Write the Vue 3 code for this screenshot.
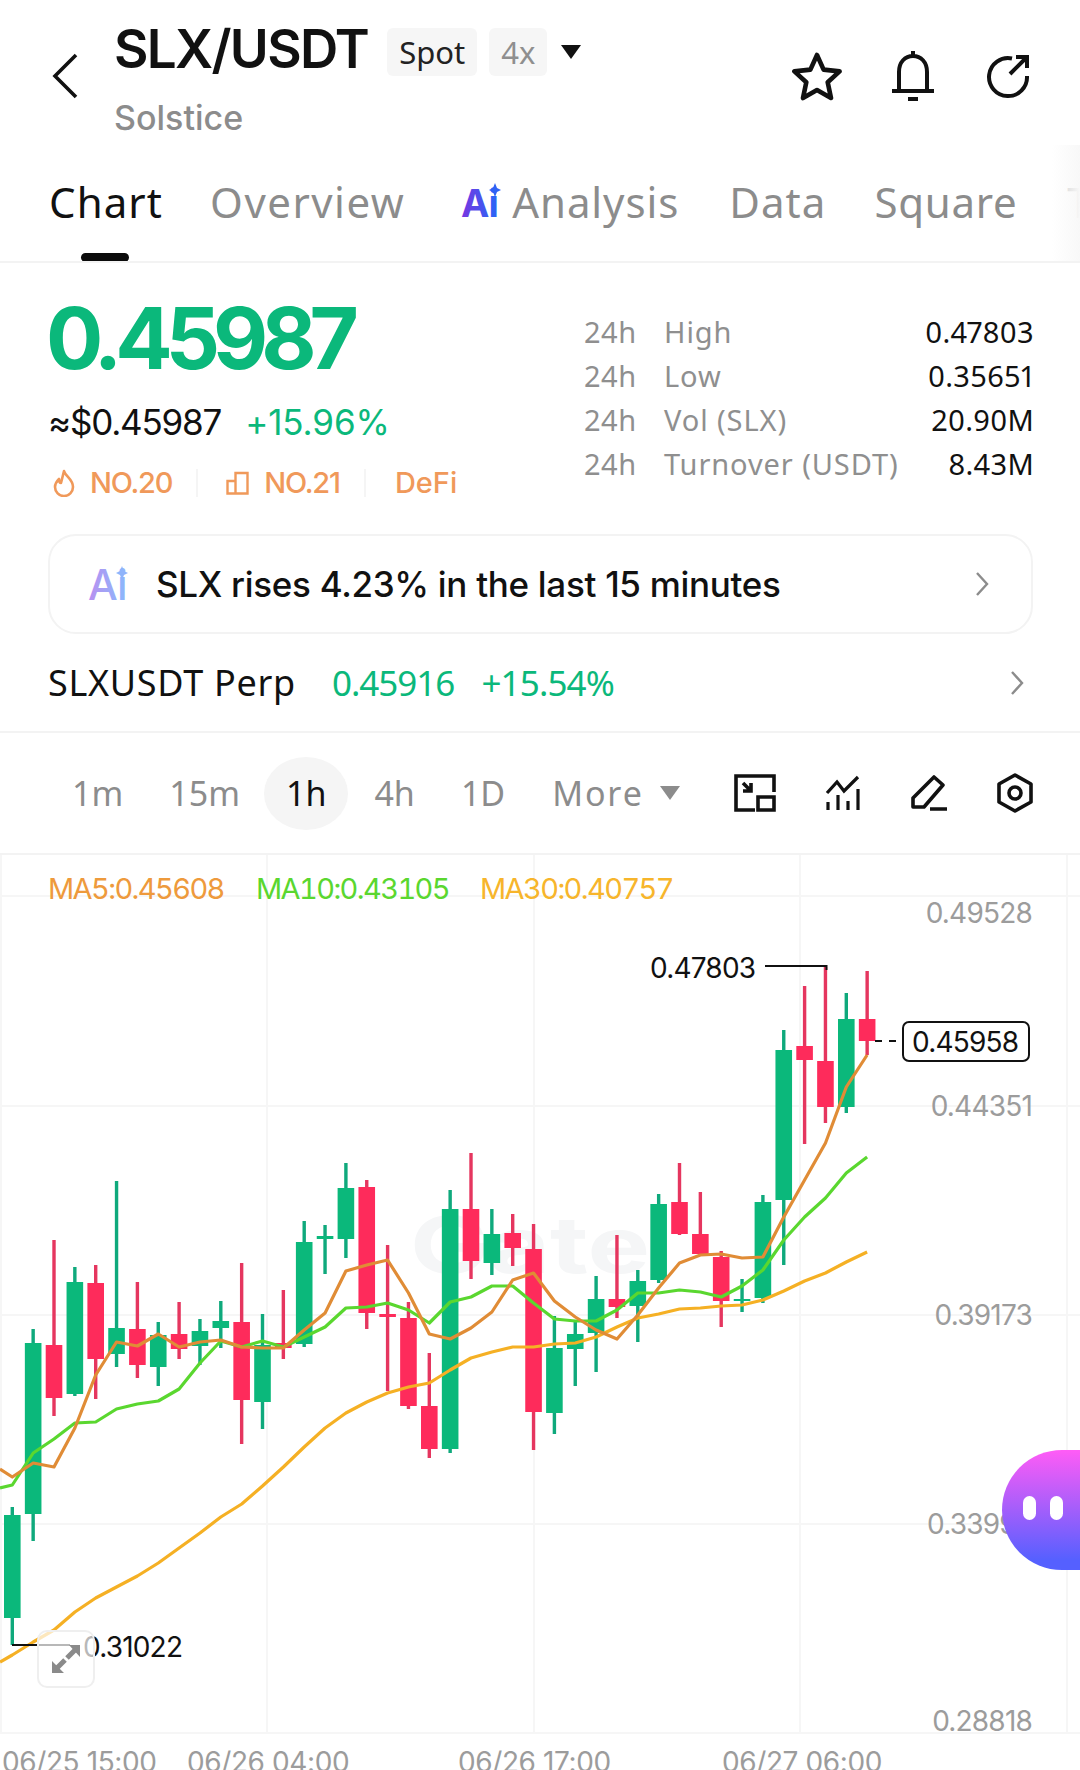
<template>
  <div class="page">
    <!-- en-tete -->
    <header class="head">
      <svg class="back" width="26" height="46" viewBox="0 0 26 46"><path d="M24 2 3 23l21 21" fill="none" stroke="#111" stroke-width="3.6" /></svg>
      <div class="pair">
        <div class="pair-row">
          <span class="symbol">SLX/USDT</span>
          <span class="tag">Spot</span>
          <span class="tag lev">4x</span>
          <span class="caret"></span>
        </div>
        <div class="fullname">Solstice</div>
      </div>
      <div class="head-icons">
        <svg width="52" height="50" viewBox="0 0 52 50"><path d="M26 4l6.6 14.6 16 1.8-11.9 10.800 3.300 15.800L26 39.100 12 47l3.300-15.800L3.400 20.400l16-1.800z" fill="none" stroke="#111" stroke-width="4.600" stroke-linejoin="round" /></svg>
        <svg width="48" height="52" viewBox="-1 0 48 52"><path d="M23 1v5M9 39V22C9 12 15 6 23 6s14 6 14 16v17M2 41h42M18 49h10" fill="none" stroke="#111" stroke-width="4" /></svg>
        <svg width="46" height="46" viewBox="0 0 46 46"><path d="M27 5.500A19 19 0 1 0 42 23M25 21 41 5M31 4h11v11" fill="none" stroke="#111" stroke-width="4" /></svg>
      </div>
    </header>

    <!-- onglets -->
    <nav class="tabs">
      <span class="tab active">Chart<i class="bar"></i></span>
      <span class="tab overview">Overview</span>
      <span class="tab ai-tab">
        <svg width="46" height="36" viewBox="0 0 46 36">
          <defs>
            <linearGradient id="aiTab" x1="0" y1="0" x2="1" y2="0"><stop offset="0" stop-color="#7a35e0" /><stop offset="0.85" stop-color="#2f62f5" /></linearGradient>
          </defs>
          <text x="0" y="34" class="ai-letters" fill="url(#aiTab)">Ai</text>
          <path d="M34 0l2 5 4 2-4 2-2 5-2-5-4-2 4-2z" fill="#2f62f5" />
        </svg>
        Analysis
      </span>
      <span class="tab">Data</span>
      <span class="tab square">Square</span>
      <span class="tab">T</span>
      <div class="tabs-fade"></div>
    </nav>

    <!-- prix -->
    <section class="ticker">
      <div class="ticker-left">
        <div class="price">0.45987</div>
        <div class="sub-row">
          <span class="usd">≈$0.45987</span>
          <span class="pct">+15.96%</span>
        </div>
        <div class="ranks">
          <svg width="24" height="28" viewBox="0 0 24 28"><path d="M12 2c1 5 9 8 9 16a9 9 0 0 1-18 0c0-4 2-6 4-8 0 3 1 4 2 4 1-4 2-8 3-12z" fill="none" stroke="#f0995a" stroke-width="2.600" stroke-linejoin="round" /></svg>
          <span class="rank">NO.20</span>
          <i class="sep"></i>
          <svg width="24" height="24" viewBox="0 0 24 24"><path d="M1.500 10h8v12.500h-8zM9.500 22.500V2h12v20.500h-12" fill="none" stroke="#f0995a" stroke-width="2.400" /></svg>
          <span class="rank">NO.21</span>
          <i class="sep"></i>
          <span class="rank defi">DeFi</span>
        </div>
      </div>
      <div class="stats">
        <template v-for="s in stats" :key="s.label">
          <span class="s-h">24h</span>
          <span class="s-l">{{ s.label }}</span>
          <span class="s-v">{{ s.value }}</span>
        </template>
      </div>
    </section>

    <!-- carte ai -->
    <div class="ai-card">
      <svg width="46" height="36" viewBox="0 0 46 36">
        <defs>
          <linearGradient id="aiCard" x1="0" y1="0" x2="1" y2="0"><stop offset="0" stop-color="#b98ff0" /><stop offset="0.85" stop-color="#8fb4fb" /></linearGradient>
        </defs>
        <text x="0" y="34" class="ai-letters big" fill="url(#aiCard)">Ai</text>
        <path d="M34 0l2 5 4 2-4 2-2 5-2-5-4-2 4-2z" fill="#8fb4fb" />
      </svg>
      <span class="ai-text">SLX rises 4.23% in the last 15 minutes</span>
      <svg class="chev" width="14" height="26" viewBox="0 0 14 26"><path d="M2 2l10 11L2 24" fill="none" stroke="#8c8c8c" stroke-width="2.400" /></svg>
    </div>

    <div class="perp">
      <span class="perp-name">SLXUSDT Perp</span>
      <span class="perp-price">0.45916</span>
      <span class="perp-pct">+15.54%</span>
      <svg class="chev" width="14" height="26" viewBox="0 0 14 26"><path d="M2 2l10 11L2 24" fill="none" stroke="#8c8c8c" stroke-width="2.400" /></svg>
    </div>

    <!-- intervalles -->
    <div class="periods">
      <span v-for="p in periods" :key="p" class="period" :class="{ on: p === '1h' }">{{ p }}</span>
      <span class="period more">More<i class="caret gray"></i></span>
      <div class="tools">
        <svg width="42" height="38" viewBox="0 0 42 38"><path d="M21 36H2V2h38v16M9 9l8 8M17 9v8H9M24 23h16v13H24z" fill="none" stroke="#111" stroke-width="3.600" /></svg>
        <svg width="36" height="36" viewBox="0 0 36 36"><path d="M2 18 12 7l7 9L33 2" fill="none" stroke="#111" stroke-width="3.200" /><path d="M3 27v8M13 20v15M23 26v9M33 14v21" fill="none" stroke="#111" stroke-width="3.200" /></svg>
        <svg width="38" height="36" viewBox="0 0 38 36"><path d="M24 2l9 8-19 22H3v-9zM20 34h17" fill="none" stroke="#111" stroke-width="3.600" stroke-linejoin="round" /></svg>
        <svg width="36" height="40" viewBox="0 0 36 40"><path d="M18 2l16 9v18l-16 9-16-9V11z" fill="none" stroke="#111" stroke-width="3.600" stroke-linejoin="round" /><circle cx="18" cy="20" r="6" fill="none" stroke="#111" stroke-width="3.600" /></svg>
      </div>
    </div>

    <!-- graphique : toile libre, coordonnees = celles de la page moins 855 -->
    <div class="chart">
      <svg class="plot" width="1080" height="915" viewBox="0 855 1080 915">
        <g stroke="#f6f6f6" stroke-width="2">
          <line v-for="y in gridY" :key="y" x1="0" x2="1080" :y1="y" :y2="y" />
          <line v-for="x in gridX" :key="x" :x1="x" :x2="x" y1="855" y2="1733" />
        </g>
        <text x="410" y="1273" class="mark" textLength="240" lengthAdjust="spacingAndGlyphs">Gate</text>

        <g v-for="(c, i) in candles" :key="i">
          <rect :x="cx(i) - 1.700" :y="c[0]" width="3.400" :height="c[3] - c[0]" :fill="c[4] === 'g' ? '#0fa97c' : '#e5365f'" />
          <rect :x="cx(i) - 8.300" :y="c[1]" width="16.600" :height="c[2] - c[1]" :fill="c[4] === 'g' ? '#0bb87b' : '#fe2b5b'" />
        </g>

        <polyline :points="line(ma30, 1662)" fill="none" stroke="#f5b024" stroke-width="3.200" stroke-linejoin="round" />
        <polyline :points="line(ma10, 1488)" fill="none" stroke="#5ad72f" stroke-width="3.200" stroke-linejoin="round" />
        <polyline :points="line(ma5, 1469)" fill="none" stroke="#e08c36" stroke-width="3.200" stroke-linejoin="round" />

        <text x="48" y="899" class="ma" fill="#ee9a3c">MA5:0.45608</text>
        <text x="256" y="899" class="ma" fill="#5ad72f">MA10:0.43105</text>
        <text x="480" y="899" class="ma" fill="#f7b52b">MA30:0.40757</text>

        <text v-for="a in axis" :key="a.t" x="1032" :y="a.y" text-anchor="end" class="axis">{{ a.t }}</text>
        <text v-for="d in dates" :key="d.t" :x="d.x" y="1772" class="axis date">{{ d.t }}</text>

        <path d="M765 966h61.500v4" fill="none" stroke="#111" stroke-width="2" />
        <text x="650" y="978" class="note">0.47803</text>
        <path d="M875 1041h27" fill="none" stroke="#111" stroke-width="2" stroke-dasharray="7 7" />
        <rect x="903" y="1022" width="126" height="39" rx="6" fill="#fff" stroke="#111" stroke-width="2" />
        <text x="912" y="1052" class="note">0.45958</text>
        <path d="M12 1645h58" fill="none" stroke="#111" stroke-width="2" />
        <text x="83" y="1657" class="note">0.31022</text>
      </svg>

      <button class="expand">
        <svg width="30" height="30" viewBox="0 0 30 30"><path d="M29 1v12L18 1zM1 29V17l12 12z" fill="#8a8a8a" /><path d="M16 14l8-8M6 24l8-8" stroke="#8a8a8a" stroke-width="5" /></svg>
      </button>
      <div class="bubble"><i></i><i></i></div>
    </div>
  </div>
</template>

<script setup>
const stats = [
  { label: 'High', value: '0.47803' },
  { label: 'Low', value: '0.35651' },
  { label: 'Vol (SLX)', value: '20.90M' },
  { label: 'Turnover (USDT)', value: '8.43M' },
]

const periods = ['1m', '15m', '1h', '4h', '1D']

const gridY = [896, 1106, 1315, 1524, 1733]
const gridX = [1, 267, 534, 800, 1067]

const axis = [
  { t: '0.49528', y: 923 },
  { t: '0.44351', y: 1116 },
  { t: '0.39173', y: 1325 },
  { t: '0.33995', y: 1534 },
  { t: '0.28818', y: 1731 },
]

const dates = [
  { t: '06/25 15:00', x: 2 },
  { t: '06/26 04:00', x: 187 },
  { t: '06/26 17:00', x: 458 },
  { t: '06/27 06:00', x: 722 },
]

// haut meche, haut corps, bas corps, bas meche, couleur
const candles = [
  [1507, 1515, 1618, 1645, 'g'], [1329, 1343, 1514, 1541, 'g'], [1240, 1345, 1398, 1416, 'r'],
  [1267, 1282, 1394, 1396, 'g'], [1265, 1283, 1359, 1399, 'r'], [1181, 1328, 1354, 1367, 'g'],
  [1282, 1329, 1365, 1378, 'r'], [1322, 1335, 1367, 1386, 'g'], [1302, 1334, 1349, 1359, 'r'],
  [1319, 1331, 1346, 1365, 'g'], [1301, 1321, 1328, 1348, 'g'], [1263, 1322, 1400, 1444, 'r'],
  [1314, 1345, 1402, 1429, 'g'], [1290, 1343, 1348, 1359, 'r'], [1221, 1242, 1344, 1347, 'g'],
  [1225, 1236, 1239, 1274, 'g'], [1163, 1188, 1239, 1258, 'g'], [1180, 1187, 1313, 1329, 'r'],
  [1245, 1314, 1317, 1391, 'r'], [1302, 1318, 1406, 1409, 'r'], [1353, 1406, 1449, 1458, 'r'],
  [1190, 1209, 1449, 1453, 'g'], [1153, 1209, 1261, 1279, 'r'], [1209, 1234, 1263, 1275, 'g'],
  [1214, 1233, 1248, 1266, 'r'], [1224, 1249, 1412, 1450, 'r'], [1316, 1348, 1413, 1434, 'g'],
  [1320, 1334, 1349, 1386, 'g'], [1276, 1299, 1333, 1372, 'g'], [1235, 1299, 1307, 1318, 'r'],
  [1270, 1281, 1306, 1342, 'g'], [1194, 1204, 1280, 1283, 'g'], [1163, 1202, 1234, 1235, 'r'],
  [1192, 1234, 1254, 1256, 'r'], [1251, 1257, 1301, 1327, 'r'], [1279, 1299, 1301, 1312, 'g'],
  [1195, 1202, 1298, 1303, 'g'], [1030, 1050, 1200, 1265, 'g'], [986, 1046, 1060, 1144, 'r'],
  [967, 1061, 1107, 1123, 'r'], [993, 1019, 1107, 1113, 'g'], [971, 1019, 1041, 1055, 'r'],
]

const ma5 = [1477, 1463, 1467, 1428, 1375, 1342, 1346, 1334, 1347, 1342, 1340, 1347, 1348, 1348, 1330, 1313, 1271, 1265, 1260, 1293, 1334, 1339, 1328, 1312, 1280, 1273, 1301, 1317, 1330, 1339, 1315, 1288, 1263, 1255, 1254, 1258, 1257, 1217, 1180, 1143, 1087, 1055]
const ma10 = [1485, 1453, 1439, 1423, 1422, 1409, 1404, 1401, 1389, 1363, 1341, 1347, 1341, 1347, 1337, 1327, 1308, 1307, 1303, 1310, 1323, 1302, 1297, 1286, 1286, 1303, 1319, 1321, 1321, 1310, 1293, 1293, 1290, 1292, 1297, 1286, 1270, 1240, 1217, 1198, 1173, 1157]
const ma30 = [1655, 1642, 1630, 1612, 1598, 1587, 1576, 1563, 1548, 1533, 1517, 1504, 1486, 1467, 1447, 1428, 1413, 1402, 1393, 1387, 1383, 1370, 1358, 1352, 1347, 1347, 1344, 1343, 1337, 1327, 1318, 1314, 1309, 1308, 1306, 1305, 1300, 1291, 1281, 1273, 1262, 1252]

const cx = (i) => 12.3 + 20.85 * i

const line = (values, startY) =>
  `0,${startY} ` + values.map((y, i) => `${cx(i).toFixed(1)},${y}`).join(' ')
</script>

<style>
html, body {
  margin: 0;
  background: #fff;
}
</style>

<style scoped>
.page {
  width: 1080px;
  height: 1770px;
  overflow: hidden;
  background: #fff;
  font-family: "Noto Sans", sans-serif;
  color: #111;
}

.head {
  display: flex;
  align-items: flex-start;
  height: 145px;
  padding: 20px 49px 0 52px;
  box-sizing: border-box;
}
.back {
  margin: 33px 36px 0 0;
}
.pair {
  flex: 1;
}
.pair-row {
  display: flex;
  align-items: center;
  height: 58px;
}
.symbol {
  font: 600 53px Inter, sans-serif;
  letter-spacing: -1.700px;
  margin-right: 19px;
}
.tag {
  font-size: 31px;
  color: #222;
  background: #f6f6f6;
  border-radius: 6px;
  height: 48px;
  line-height: 48px;
  padding: 0 12px;
  margin: 5px 12px 0 0;
}
.tag.lev {
  color: #8f8f8f;
}
.caret {
  display: block;
  width: 0;
  height: 0;
  border-left: 10px solid transparent;
  border-right: 10px solid transparent;
  border-top: 14px solid #111;
  margin: 5px 0 0 2px;
}
.caret.gray {
  border-top-color: #8c8c8c;
  display: inline-block;
  margin: 0 0 6px 16px;
  vertical-align: middle;
}
.fullname {
  font: 500 34px Inter, sans-serif;
  color: #8c8c8c;
  margin-top: 19px;
}
.head-icons {
  display: flex;
  align-items: center;
  gap: 48px;
  margin-top: 30px;
}
.head-icons svg:first-child {
  margin-right: -2px;
}

.tabs {
  position: relative;
  display: flex;
  gap: 50px;
  height: 118px;
  padding: 21px 0 0 49px;
  box-sizing: border-box;
  border-bottom: 2px solid #f3f3f3;
  overflow: hidden;
}
.tab {
  position: relative;
  display: flex;
  align-items: center;
  height: 70px;
  font-size: 42px;
  color: #8c8c8c;
  white-space: nowrap;
  letter-spacing: 1.100px;
}
.tab.active {
  color: #111;
}
.tab .bar {
  position: absolute;
  left: 32px;
  top: 87px;
  width: 48px;
  height: 9px;
  background: #0b0b0b;
  border-radius: 5px;
}
.overview {
  margin-left: -3px;
  letter-spacing: 1.500px;
}
.ai-tab {
  gap: 5px;
  margin-left: 6px;
  letter-spacing: 0.900px;
}
.square {
  margin-left: -2px;
  letter-spacing: 0.700px;
}
.ai-letters {
  font: 700 38px Inter, sans-serif;
  letter-spacing: -1px;
}
.ai-letters.big {
  font-weight: 500;
  font-size: 42px;
}
.tabs-fade {
  position: absolute;
  right: 0;
  top: 0;
  bottom: 0;
  width: 28px;
  background: linear-gradient(90deg, rgba(255, 255, 255, 0.5), #f8f8f8);
}

.ticker {
  display: flex;
  justify-content: space-between;
  height: 271px;
  padding: 0 46px 0 48px;
  box-sizing: border-box;
}
.price {
  font: 700 85px Inter, sans-serif;
  letter-spacing: -7px;
  color: #0bb87b;
  margin: 26px 0 0 -2px;
  line-height: 100px;
}
.sub-row {
  display: flex;
  gap: 24px;
  margin-top: 12px;
  font: 400 35px Inter, sans-serif;
  letter-spacing: -1.200px;
}
.pct {
  color: #0bb87b;
  letter-spacing: -0.100px;
}
.ranks {
  display: flex;
  align-items: center;
  margin-top: 22px;
  color: #f0995a;
  font: 500 29px Inter, sans-serif;
  letter-spacing: -1.200px;
}
.ranks svg {
  margin: 0 14px 0 4px;
}
.sep {
  width: 2px;
  height: 28px;
  background: #f5f5f5;
  margin: 0 24px;
}
.rank.defi {
  margin-left: 5px;
  letter-spacing: 0;
}
.stats {
  display: grid;
  grid-template-columns: 80px 1fr auto;
  grid-auto-rows: 44px;
  width: 450px;
  margin-top: 47px;
  font-size: 29px;
  line-height: 44px;
  letter-spacing: 0.500px;
}
.s-h {
  color: #8f8f8f;
}
.s-l {
  color: #8f8f8f;
  letter-spacing: 0.900px;
}
.s-v {
  text-align: right;
  letter-spacing: 0.300px;
  font-variant-numeric: proportional-nums;
}

.ai-card {
  display: flex;
  align-items: center;
  height: 100px;
  margin: 0 47px 0 48px;
  padding: 0 42px 0 38px;
  box-sizing: border-box;
  border: 2px solid #f3f3f3;
  border-radius: 28px;
}
.ai-text {
  flex: 1;
  margin-left: 22px;
  font: 500 35px Inter, sans-serif;
  letter-spacing: -0.300px;
}

.perp {
  display: flex;
  align-items: center;
  height: 97px;
  padding: 0 56px 0 48px;
  border-bottom: 2px solid #f3f3f3;
  font-size: 35px;
}
.perp-name {
  font-size: 36px;
  letter-spacing: 0.700px;
  margin-right: 36px;
}
.perp-price {
  color: #0bb87b;
  letter-spacing: -1px;
}
.perp-pct {
  flex: 1;
  margin-left: 27px;
  color: #0bb87b;
  letter-spacing: -0.850px;
}

.periods {
  display: flex;
  align-items: center;
  height: 120px;
  padding: 0 47px 0 49px;
  border-bottom: 2px solid #f3f3f3;
}
.period {
  font-size: 34px;
  color: #8c8c8c;
  padding: 0 23px;
  height: 73px;
  line-height: 73px;
  white-space: nowrap;
}
.period.on {
  color: #111;
  background: #f5f5f5;
  border-radius: 50%;
  padding: 0 22px;
  margin: 0 3px 0 1px;
}
.more {
  margin-left: 1px;
  letter-spacing: 1.900px;
}
.tools {
  display: flex;
  align-items: center;
  gap: 49px;
  margin-left: auto;
}

.chart {
  position: relative;
  height: 915px;
}
.plot {
  display: block;
}
.mark {
  font: 700 78px Inter, sans-serif;
  fill: #f5f6f7;
}
.ma {
  font: 400 29px Inter, sans-serif;
  font-variant-numeric: tabular-nums;
  letter-spacing: -1.600px;
}
.axis {
  font: 400 28px Inter, sans-serif;
  letter-spacing: -0.800px;
  fill: #9c9c9c;
}
.axis.date {
  letter-spacing: -0.400px;
}
.note {
  font: 400 28px Inter, sans-serif;
  letter-spacing: -0.800px;
  fill: #111;
}
.expand {
  position: absolute;
  left: 37px;
  top: 775px;
  width: 58px;
  height: 58px;
  padding: 0;
  display: flex;
  align-items: center;
  justify-content: center;
  background: rgba(255, 255, 255, 0.7);
  border: 2px solid #efefef;
  border-radius: 10px;
}
.bubble {
  position: absolute;
  left: 1002px;
  top: 595px;
  width: 138px;
  height: 120px;
  border-radius: 60px;
  background: linear-gradient(180deg, #ff5cf6, #5560ff 92%);
  display: flex;
  gap: 14px;
  padding: 46px 0 0 21px;
  box-sizing: border-box;
}
.bubble i {
  width: 13px;
  height: 24px;
  border-radius: 6.500px;
  background: #fff;
}
</style>
